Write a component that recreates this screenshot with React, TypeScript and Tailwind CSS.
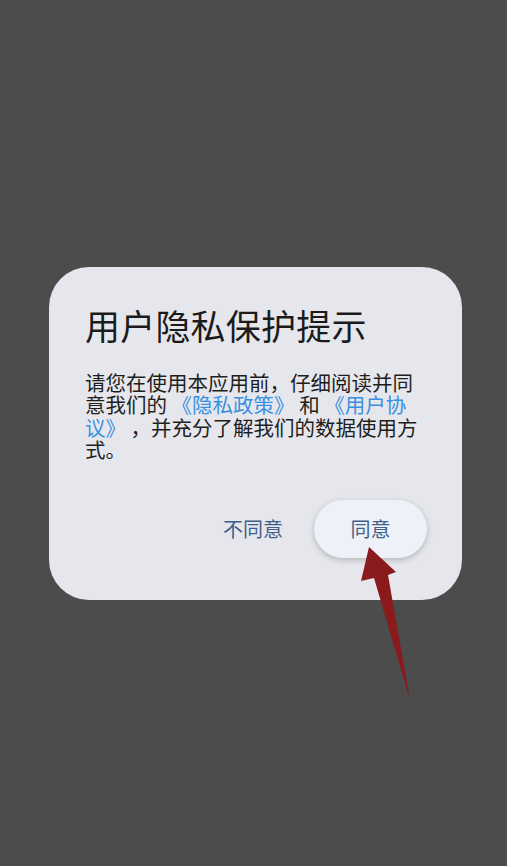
import React from 'react';

export default function App() {
    return (
        <div
            className="relative w-[507px] h-[866px] bg-[#4c4c4c] flex items-center pl-[49px]"
            style={{ fontFamily: '"Noto Sans CJK SC", "Noto Sans", sans-serif' }}
        >
            <div className="w-[413px] h-[333px] bg-[#e6e7ec] rounded-[40px] pl-[36px] pr-[35px] pt-[34px] flex flex-col">
                <h1 className="text-[35px] leading-[48px] text-[#1b1b1b] tracking-[0.2px]">用户隐私保护提示</h1>
                <p className="mt-[22px] text-[20.5px] leading-[22.5px] text-[#1e1e1e] w-[335px]">
                    请您在使用本应用前，仔细阅读并同意我们的{' '}
                    <span className="text-[#3a90e0]">《隐私政策》</span> 和{' '}
                    <span className="text-[#3a90e0]">《用户协议》</span> ，并充分了解我们的数据使用方式。
                </p>
                <div className="mt-auto mb-[42px] flex items-center justify-end gap-[31px]">
                    <button className="text-[20px] text-[#3e5f8b]">不同意</button>
                    <button className="w-[113px] h-[58px] rounded-full bg-[#eff1f8] shadow-[0_2px_6px_rgba(0,0,0,0.22)] text-[20px] text-[#3e5f8b]">
                        同意
                    </button>
                </div>
            </div>

            {/* annotation arrow */}
            <svg className="absolute left-0 top-0 pointer-events-none" width="507" height="866" viewBox="0 0 507 866">
                <polygon
                    points="369,547 396,572 388,575 410,700 374,578 361,581"
                    fill="#8a1a1c"
                />
            </svg>
        </div>
    );
}
